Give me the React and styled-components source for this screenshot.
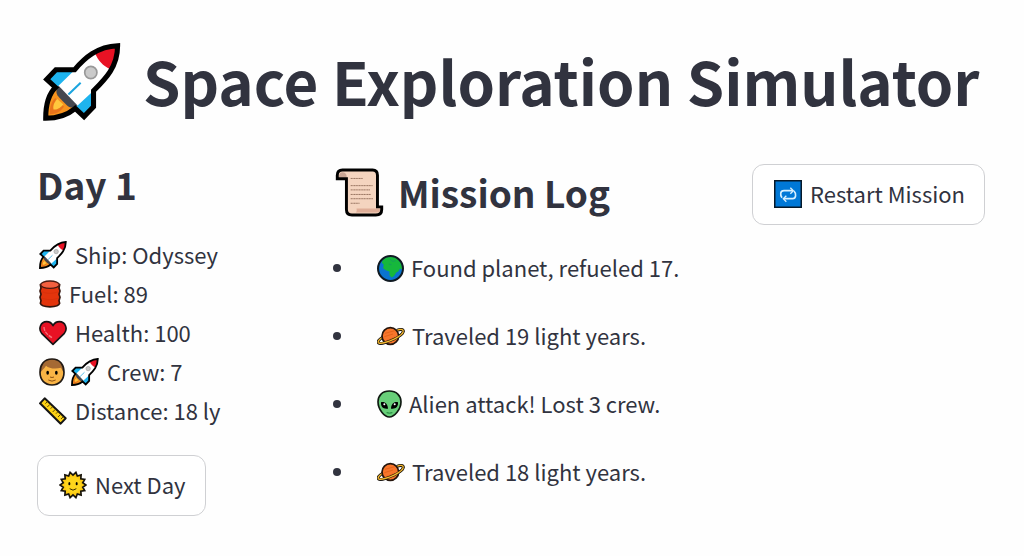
import React from 'react';
import styled, {createGlobalStyle} from 'styled-components';


const GlobalStyle = createGlobalStyle`
  * {
    box-sizing: border-box;
  }
  body {
    margin: 0;
    background-color: #fefefe;
    color: #31333f;
    font-family: "Noto Sans CJK JP", "Noto Sans", sans-serif;
    font-size: 22px;
  }
`;

const Page = styled.main`
  padding: 43px 39px 40px 37px;
`;
const Header = styled.header`
  display: flex;
  align-items: flex-start;
  gap: 22px;
  padding-left: 6px;
  margin-bottom: 43px;
`;
const Title = styled.h1`
  margin: 0;
  font-size: 60px;
  font-weight: 700;
  line-height: 74px;
  white-space: nowrap;
`;
const Columns = styled.div`
  display: grid;
  grid-template-columns: 13fr 19fr auto;
  column-gap: 24px;
  align-items: start;
`;
const Heading = styled.h2`
  display: flex;
  align-items: center;
  gap: 14px;
  margin: 0;
  height: ${props => props.$tall ? 56 : 40}px;
  padding-left: ${props => props.$tall ? 3 : 0}px;
  font-size: 37px;
  font-weight: 600;
  line-height: 40px;
  white-space: nowrap;
`;
const Stats = styled.ul`
  list-style: none;
  margin: 31px 0 25px;
  padding: 0 0 0 2px;
`;
const Stat = styled.li`
  display: flex;
  align-items: center;
  gap: 8px;
  height: 39px;
  white-space: nowrap;
`;
const Icons = styled.span`
  display: flex;
  align-items: center;
  gap: 6px;
`;
const Label = styled.span`
  padding-bottom: 2px;
`;
const Log = styled.ul`
  list-style: none;
  margin: 14px 0 0;
  padding: 0 0 0 1px;
`;
const Entry = styled.li`
  display: flex;
  align-items: center;
  gap: 7px;
  height: 68px;
  white-space: nowrap;

  &::before {
    content: '';
    width: 8px;
    height: 8px;
    margin-right: 29px;
    border-radius: 50%;
    background-color: #31333f;
  }
`;
const Button = styled.button`
  display: inline-flex;
  align-items: center;
  gap: 8px;
  height: 61px;
  padding: 0 19px 2px 21px;
  border: 1px solid #cfd0d3;
  border-radius: 12px;
  background-color: #fff;
  color: inherit;
  font: inherit;
  white-space: nowrap;
  cursor: pointer;
`;
const Emoji = styled.svg`
  flex: none;
  display: block;
`;

const Rocket = ({size = 28}) => (
  <Emoji width={size} height={size} viewBox="0 0 230 230" aria-hidden="true">
    <path d="M95 79H38L11 107L37 131L60 180L92 193L121 217L149 188V141Z" fill="#1eb4ef"/>
    <path d="M37 131C15 152 8 180 8 222C45 222 72 212 95 190L62 150Z" fill="#f7931e"/>
    <path d="M36 162C22 176 20 192 20 210C38 209 50 204 62 188Z" fill="#e8741c"/>
    <path d="M42 165C32 176 29 184 31 196C44 197 54 188 60 181Z" fill="#ffc83d"/>
    <path d="M220 8C160 10 122 45 94 79L42 130L98 188L149 141C185 105 220 70 220 8Z" fill="#fff"/>
    <path d="M220 8C196 9 174 18 154 31C162 52 178 68 197 77C211 57 220 34 220 8Z" fill="#e81224"/>
    <path d="M46 126C36 140 38 151 49 162L68 181C79 192 90 194 102 184Z" fill="#45474f"/>
    <path d="M75 152L111 117" stroke="#1ba5df" strokeWidth="6"/>
    <circle cx="141" cy="87" r="18" fill="#cacaca" stroke="#999" strokeWidth="5"/>
    <path
      d="M220 8C160 10 122 45 93 79H38L11 107L37 131C15 152 8 180 8 222C45 222 72 212 95 193L121 217L149 188V141C185 105 220 70 220 8Z"
      fill="none" stroke="#000" strokeWidth="15"/>
  </Emoji>
);

const Scroll = () => (
  <Emoji width="49" height="49" viewBox="46 38 148 150" aria-hidden="true">
    <path d="M52 71V60Q52 44 68 44H160Q175 44 175 60V157H188V165Q188 182 170 182H97Q80 182 80 165V71Z" fill="#f4d4bf"/>
    <path d="M57 67Q57 51 69 51Q81 52 81 67Z" fill="#c9a594"/>
    <path d="M109 174Q113 170 111 162H184V165Q182 174 172 174Z" fill="#dfae98"/>
    <path d="M93 70H130M93 92H160M93 105H152M93 119H155M93 132H161M93 146H120" stroke="#97735f" strokeWidth="3" strokeDasharray="4 1"/>
    <path d="M52 71V60Q52 44 68 44H160Q175 44 175 60V157H188V165Q188 182 170 182H97Q80 182 80 165V71Z" fill="none" stroke="#000" strokeWidth="9"/>
  </Emoji>
);

const Barrel = () => (
  <Emoji width="22" height="28" viewBox="0 0 66 84" aria-hidden="true">
    <path d="M4 14L6 24L3 33L6 43L3 52L6 62L4 70C8 84 58 84 62 70L60 62L63 52L60 43L63 33L60 24L62 14Z" fill="#e3340c" stroke="#34150d" strokeWidth="5" strokeLinejoin="round"/>
    <ellipse cx="33" cy="14" rx="28" ry="11" fill="#f4603f" stroke="#4a1a10" strokeWidth="4"/>
    <path d="M7 34C20 42 46 42 59 34M7 53C20 61 46 61 59 53" fill="none" stroke="#d22f0b" strokeWidth="2"/>
  </Emoji>
);

const Heart = () => (
  <Emoji width="28" height="26" viewBox="0 0 84 76" aria-hidden="true">
    <path d="M42 72L8 39C-3 25 5 4 23 4C33 4 39 10 42 16C45 10 51 4 61 4C79 4 87 25 76 39Z" fill="#e81224" stroke="#191314" strokeWidth="5" strokeLinejoin="round"/>
    <path d="M15 20C15 34 26 44 39 52" fill="none" stroke="#f4747d" strokeWidth="4" strokeDasharray="12 3"/>
  </Emoji>
);

const Boy = () => (
  <Emoji width="26" height="28" viewBox="0 0 78 84" aria-hidden="true">
    <path d="M39 3C14 3 3 22 3 43C3 67 18 81 39 81C60 81 75 67 75 43C75 22 64 3 39 3Z" fill="#f9b445"/>
    <path d="M4 44C1 21 13 3 39 3C65 3 77 21 74 44L66 29C49 34 29 31 21 23C17 31 10 34 4 44Z" fill="#a56a34"/>
    <path d="M39 3C14 3 3 22 3 43C3 67 18 81 39 81C60 81 75 67 75 43C75 22 64 3 39 3Z" fill="none" stroke="#211a15" strokeWidth="5"/>
    <ellipse cx="26" cy="44" rx="4" ry="6" fill="#000"/>
    <ellipse cx="52" cy="44" rx="4" ry="6" fill="#000"/>
    <path d="M33 57Q39 60 45 57M28 66Q39 73 50 66" fill="none" stroke="#8b5013" strokeWidth="3"/>
  </Emoji>
);

const Ruler = () => (
  <Emoji width="28" height="28" viewBox="0 0 84 84" aria-hidden="true">
    <path d="M17 4L80 64L65 80L3 19Z" fill="#fcd116" stroke="#151515" strokeWidth="6" strokeLinejoin="round"/>
    <path d="M25 14L19 20M33 22L25 30M41 29L35 35M49 37L41 45M57 44L51 50M65 52L57 60M72 60L66 66" stroke="#5c4b00" strokeWidth="3"/>
  </Emoji>
);

const rays = Array.from({length: 28}, (_, i) => {
  const radius = i % 2 ? 30 : 39;
  const angle = (i + 1) * Math.PI / 14;
  return `${42 + radius * Math.sin(angle)},${42 - radius * Math.cos(angle)}`;
}).join(' ');

const Sun = () => (
  <Emoji width="28" height="28" viewBox="0 0 84 84" aria-hidden="true">
    <polygon points={rays} fill="#fdcb13" stroke="#17130a" strokeWidth="5"/>
    <circle cx="42" cy="42" r="24" fill="#fed51c"/>
    <ellipse cx="31" cy="38" rx="3" ry="5" fill="#000"/>
    <ellipse cx="53" cy="38" rx="3" ry="5" fill="#000"/>
    <path d="M32 53Q42 62 52 53" fill="none" stroke="#3c2c00" strokeWidth="3"/>
  </Emoji>
);

const Repeat = () => (
  <Emoji width="28" height="28" viewBox="0 0 84 84" aria-hidden="true">
    <rect x="2" y="2" width="80" height="80" fill="#0078d7" stroke="#06192a" strokeWidth="5"/>
    <path d="M24 53C18 45 18 32 30 32H57M60 33C68 41 66 56 56 56H30" fill="none" stroke="#d8f0ff" strokeWidth="5"/>
    <path d="M49 23L58 32L49 41M37 47L28 56L37 65" fill="none" stroke="#d8f0ff" strokeWidth="4"/>
  </Emoji>
);

const Globe = () => (
  <Emoji width="27" height="27" viewBox="0 0 80 80" aria-hidden="true">
    <circle cx="40" cy="40" r="37" fill="#0a74cf"/>
    <path d="M19 12C31 3 50 3 61 11L72 25L76 44L68 40L63 49L57 52L50 63L43 67L37 60L37 49L26 45L18 39L20 29L14 22Z" fill="#16b83c"/>
    <path d="M38 12L47 19L55 17M35 27L43 29" fill="none" stroke="#159264" strokeWidth="2"/>
    <circle cx="40" cy="40" r="37" fill="none" stroke="#101a22" strokeWidth="6"/>
  </Emoji>
);

const Saturn = () => (
  <Emoji width="28" height="20" viewBox="0 0 84 60" aria-hidden="true">
    <path d="M18 33C6 40 1 47 5 51C15 58 78 30 79 16C79 9 69 9 60 13" fill="none" stroke="#17130f" strokeWidth="9"/>
    <path d="M18 33C6 40 1 47 5 51C15 58 78 30 79 16C79 9 69 9 60 13" fill="none" stroke="#f5b82e" strokeWidth="4"/>
    <circle cx="40" cy="30" r="25" fill="#f8752b" stroke="#24150d" strokeWidth="5"/>
    <path d="M24 22L53 14M22 32L48 24M29 44L54 34" stroke="#e5641b" strokeWidth="3"/>
    <path d="M5 51C16 55 34 47 50 40C64 33 78 24 79 16" fill="none" stroke="#17130f" strokeWidth="7"/>
    <path d="M5 51C16 55 34 47 50 40C64 33 78 24 79 16" fill="none" stroke="#f5b82e" strokeWidth="4"/>
  </Emoji>
);

const Alien = () => (
  <Emoji width="25" height="28" viewBox="0 0 75 84" aria-hidden="true">
    <path d="M37 3C16 3 3 17 3 35C3 58 22 81 37 81C52 81 72 58 72 35C72 17 58 3 37 3Z" fill="#68cf79" stroke="#101a12" strokeWidth="5"/>
    <path d="M12 37C24 34 32 42 33 56C18 58 11 50 12 37ZM63 37C51 34 43 42 42 56C57 58 64 50 63 37Z" fill="#000"/>
    <circle cx="22" cy="43" r="3" fill="#fff"/>
    <circle cx="53" cy="43" r="3" fill="#fff"/>
    <path d="M29 68Q37 71 46 68" fill="none" stroke="#187e35" strokeWidth="3"/>
  </Emoji>
);

const stats = [
  {icons: [Rocket], text: 'Ship: Odyssey'},
  {icons: [Barrel], text: 'Fuel: 89'},
  {icons: [Heart], text: 'Health: 100'},
  {icons: [Boy, Rocket], text: 'Crew: 7'},
  {icons: [Ruler], text: 'Distance: 18 ly'},
];

const log = [
  {Icon: Globe, text: 'Found planet, refueled 17.'},
  {Icon: Saturn, text: 'Traveled 19 light years.'},
  {Icon: Alien, text: 'Alien attack! Lost 3 crew.'},
  {Icon: Saturn, text: 'Traveled 18 light years.'},
];

const App = () => (
  <Page>
    <GlobalStyle/>
    <Header>
      <Rocket size={78}/>
      <Title>Space Exploration Simulator</Title>
    </Header>
    <Columns>
      <section>
        <Heading>Day 1</Heading>
        <Stats>
          {stats.map(({icons, text}) => (
            <Stat key={text}>
              <Icons>
                {icons.map((Icon, i) => <Icon key={i}/>)}
              </Icons>
              <Label>{text}</Label>
            </Stat>
          ))}
        </Stats>
        <Button type="button"><Sun/><Label>Next Day</Label></Button>
      </section>
      <section>
        <Heading $tall><Scroll/>Mission Log</Heading>
        <Log>
          {log.map(({Icon, text}) => (
            <Entry key={text}>
              <Icon/>
              <Label>{text}</Label>
            </Entry>
          ))}
        </Log>
      </section>
      <Button type="button"><Repeat/><Label>Restart Mission</Label></Button>
    </Columns>
  </Page>
);

export default App;
